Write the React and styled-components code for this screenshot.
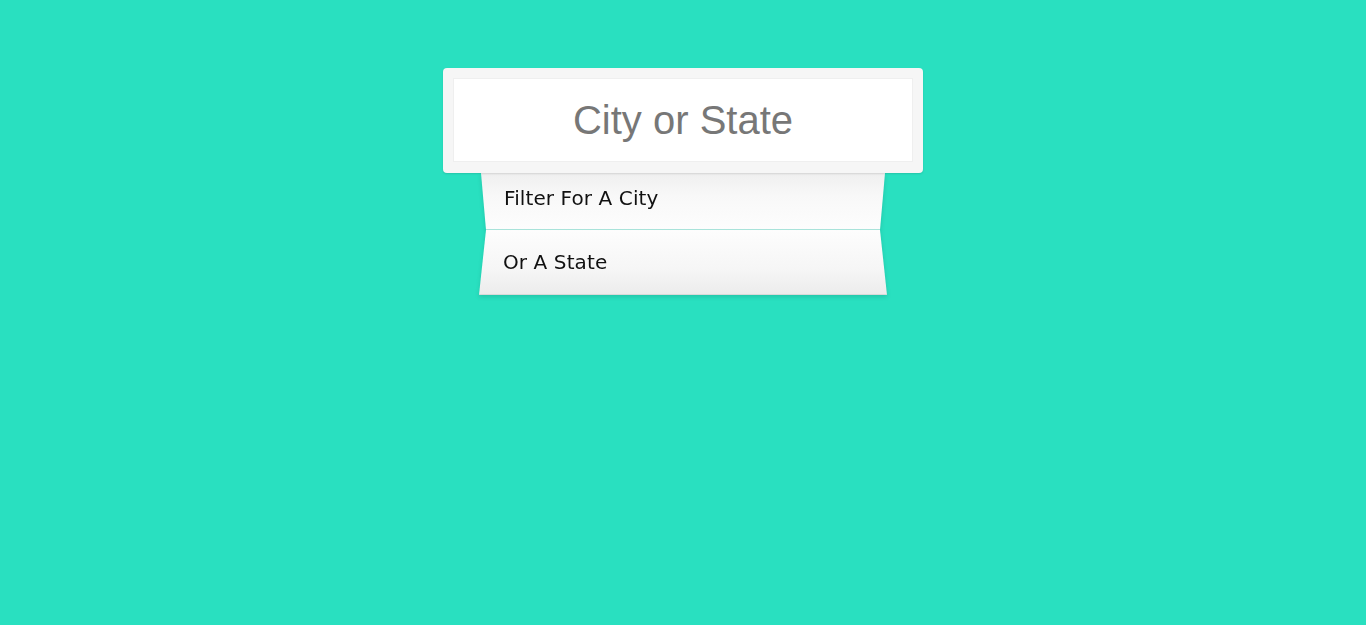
import styled, { createGlobalStyle } from "styled-components";

const Global = createGlobalStyle`
  html, body {
    margin: 0;
    padding: 0;
    background: #29e0c0;
    height: 100%;
  }
  #root {
    min-height: 100vh;
  }
`;

const Page = styled.div`
  min-height: 100vh;
  background: #29e0c0;
  display: flex;
  flex-direction: column;
  align-items: center;
  padding-top: 68px;
  box-sizing: border-box;
`;

const SearchBox = styled.div`
  width: 480px;
  height: 105px;
  box-sizing: border-box;
  padding: 10px 10px 11px;
  background: #f6f6f6;
  border-radius: 4px;
  box-shadow: 0 1px 2px rgba(0, 0, 0, 0.12);
  position: relative;
  z-index: 2;
`;

const SearchInput = styled.input`
  width: 100%;
  height: 100%;
  box-sizing: border-box;
  border: 1px solid #efefef;
  background: #fff;
  outline: none;
  text-align: center;
  font-family: "Liberation Sans", Arial, sans-serif;
  font-size: 40px;
  color: #777;
  &::placeholder {
    color: #777;
  }
`;

const List = styled.ul`
  list-style: none;
  margin: 0;
  padding: 0;
  width: 408px;
  filter: drop-shadow(0 2px 2px rgba(0, 0, 0, 0.12));
`;

const Item = styled.li`
  height: ${(p) => p.$h}px;
  box-sizing: border-box;
  display: flex;
  align-items: center;
  padding-left: ${(p) => p.$pad}px;
  padding-bottom: ${(p) => p.$lift}px;
  font-family: "DejaVu Sans", Verdana, sans-serif;
  font-size: 20px;
  letter-spacing: 0.1px;
  color: #111;
  background: ${(p) =>
    p.$fold === "in"
      ? "linear-gradient(180deg, #efefef 0%, #f8f8f8 40%, #fdfdfd 100%)"
      : "linear-gradient(180deg, #fdfdfd 0%, #f6f6f6 60%, #ececec 100%)"};
  clip-path: ${(p) =>
    p.$fold === "in"
      ? "polygon(2px 0, 406px 0, 401px 100%, 7px 100%)"
      : "polygon(7px 0, 401px 0, 408px 100%, 0 100%)"};
  border-bottom: 1px solid ${(p) => (p.$fold === "in" ? "#a9e3da" : "#d9d9d9")};
`;

export default function App() {
  return (
    <Page>
      <Global />
      <SearchBox>
        <SearchInput placeholder="City or State" />
      </SearchBox>
      <List>
        <Item $fold="in" $h={57} $pad={25} $lift={6}>
          Filter For A City
        </Item>
        <Item $fold="out" $h={65} $pad={24} $lift={0}>
          Or A State
        </Item>
      </List>
    </Page>
  );
}
